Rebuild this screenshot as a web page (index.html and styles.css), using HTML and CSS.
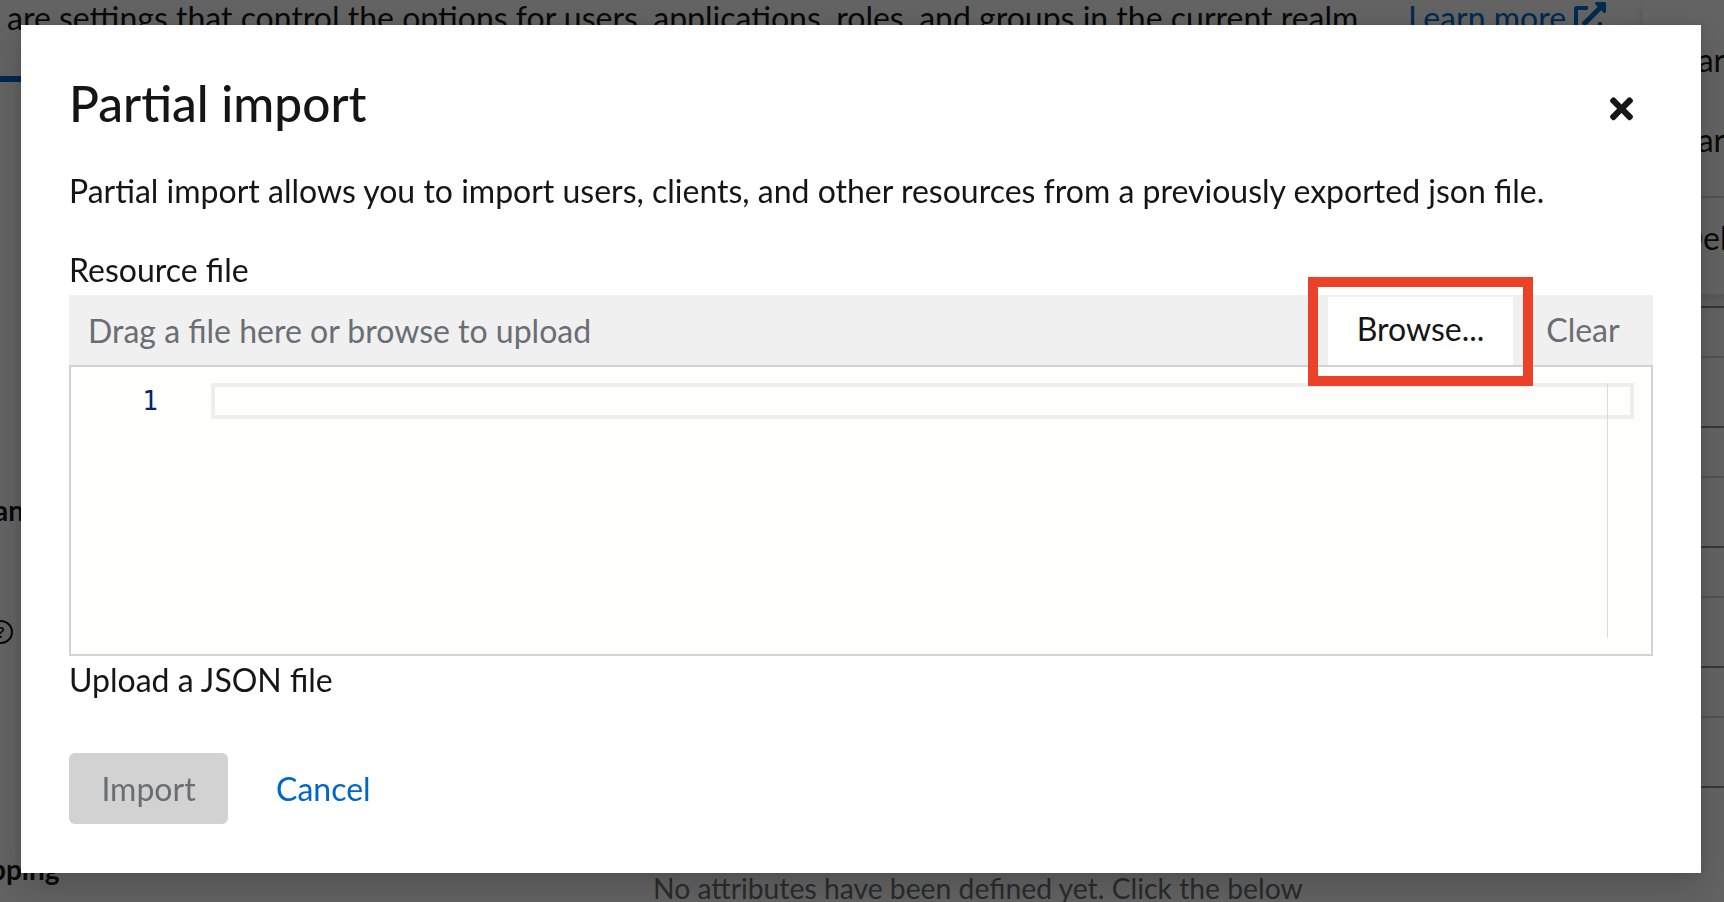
FILE: index.html
```html
<!DOCTYPE html>
<html lang="en">
<head>
<meta charset="utf-8">
<title>Partial import</title>
<link rel="stylesheet" href="styles.css">
</head>
<body>
<div class="page">
  <div class="page-intro">
    <span class="intro-text">are settings that control the options for users, applications, roles, and groups in the current realm.</span>
    <a class="learn-more" href="#">Learn more
      <svg viewBox="0 0 512 512" aria-hidden="true"><path d="M432,320H400a16,16,0,0,0-16,16V448H64V128H208a16,16,0,0,0,16-16V80a16,16,0,0,0-16-16H48A48,48,0,0,0,0,112V464a48,48,0,0,0,48,48H400a48,48,0,0,0,48-48V336A16,16,0,0,0,432,320ZM488,0h-128c-21.37,0-32.05,25.91-17,41l35.730,35.730L135,320.37a24,24,0,0,0,0,34L157.67,377a24,24,0,0,0,34,0L435.28,133.32,471,169c15,15,41,4.5,41-17V24A24,24,0,0,0,488,0Z"/></svg>
    </a>
  </div>
  <div class="tab-underline"></div>
  <div class="page-body">
    <div class="left-col">
      <div class="lbl lbl-an">an</div>
      <div class="help-icon">?</div>
      <div class="lbl lbl-pping">pping</div>
    </div>
    <div class="center-col">
      <div class="empty-text">No attributes have been defined yet. Click the below</div>
    </div>
    <div class="right-col">
      <div class="field-input"></div>
      <div class="field-input"></div>
      <div class="field-input"></div>
      <div class="field-input"></div>
      <div class="field-input"></div>
    </div>
  </div>
  <div class="action-menu">
    <div class="menu-item">Partial import</div>
    <div class="menu-item">Partial export</div>
    <div class="menu-divider"></div>
    <div class="menu-item">Delete</div>
  </div>
</div>

<div class="backdrop">
  <div class="modal" role="dialog" aria-labelledby="modal-title">
    <h1 class="modal-title" id="modal-title">Partial import</h1>
    <button class="close-btn" aria-label="Close">
      <svg viewBox="0 0 352 512" aria-hidden="true"><path d="M242.72 256l100.07-100.07c12.28-12.28 12.28-32.19 0-44.48l-22.24-22.24c-12.28-12.28-32.19-12.28-44.48 0L176 189.28 75.93 89.21c-12.28-12.28-32.19-12.28-44.48 0L9.21 111.45c-12.28 12.28-12.28 32.19 0 44.48L109.28 256 9.21 356.07c-12.28 12.28-12.28 32.19 0 44.48l22.24 22.24c12.28 12.28 32.2 12.28 44.48 0L176 322.72l100.07 100.07c12.28 12.28 32.2 12.28 44.48 0l22.24-22.24c12.28-12.28 12.28-32.19 0-44.48L242.72 256z"/></svg>
    </button>
    <div class="modal-body">
      <p class="desc">Partial import allows you to import users, clients, and other resources from a previously exported json file.</p>
      <div class="form-group">
        <label class="form-label">Resource file</label>
        <div class="file-upload">
          <div class="file-bar">
            <div class="file-input">Drag a file here or browse to upload</div>
            <div class="browse-btn">Browse...</div>
            <div class="clear-btn">Clear</div>
          </div>
          <div class="editor">
            <div class="gutter">1</div>
            <div class="code-area">
              <div class="current-line"></div>
              <div class="overview-ruler"></div>
            </div>
          </div>
          <div class="annotation"></div>
        </div>
        <div class="helper">Upload a JSON file</div>
      </div>
    </div>
    <div class="modal-footer">
      <button class="btn btn-import" disabled>Import</button>
      <button class="btn btn-cancel">Cancel</button>
    </div>
  </div>
</div>
</body>
</html>
```
FILE: styles.css
```css
* { box-sizing: border-box; }
html, body { margin: 0; padding: 0; }
body {
  width: 1724px;
  height: 902px;
  overflow: hidden;
  position: relative;
  background: #fff;
  font-family: "Lato", "Open Sans", sans-serif;
  color: #151515;
  font-size: 32px;
  line-height: 48px;
}

/* ---------- background page ---------- */
.page { height: 902px; overflow: hidden; position: relative; }
.page-intro {
  display: flex;
  align-items: center;
  height: 48px;
  margin-top: -6px;
  padding-left: 7px;
  white-space: nowrap;
}
.learn-more {
  color: #06c;
  margin-left: 42px;
  display: inline-flex;
  align-items: center;
  gap: 8px;
  text-decoration: none;
}
.learn-more svg { width: 32px; height: 32px; fill: #06c; }
.tab-underline { margin-top: 34px; height: 6px; width: 400px; background: #06c; }

.page-body { display: flex; height: 820px; }
.left-col { width: 600px; flex: none; display: flex; flex-direction: column; align-items: flex-start; }
.lbl { font-size: 28px; font-weight: 700; white-space: nowrap; }
.lbl-an { margin-top: 404px; margin-left: -6px; }
.help-icon {
  margin-top: 86px;
  margin-left: -11px;
  width: 24px;
  height: 24px;
  border: 2.5px solid #151515;
  border-radius: 50%;
  font-size: 16px;
  line-height: 19px;
  text-align: center;
  font-weight: 700;
}
.lbl-pping { margin-top: 201px; margin-left: -10px; }
.center-col { width: 700px; flex: none; }
.empty-text {
  margin-top: 782px;
  padding-left: 53px;
  font-size: 28.3px;
  color: #6a6e73;
  white-space: nowrap;
}
.right-col { flex: 1; padding-top: 154px; display: flex; flex-direction: column; gap: 48px; }
.field-input {
  height: 72px;
  background: #fff;
  border-top: 2px solid #d2d2d2;
  border-bottom: 2px solid #8a8d90;
}

.action-menu {
  position: absolute;
  left: 1643px;
  top: 0;
  width: 320px;
  background: #fff;
  padding: 20px 0 16px;
  box-shadow: 0 8px 16px 0 rgba(3, 3, 3, .12), 0 0 8px 0 rgba(3, 3, 3, .06);
}
.menu-item { padding: 16px 36px; white-space: nowrap; }
.menu-divider { height: 2px; background: #d2d2d2; margin-top: 16px; }

/* ---------- modal ---------- */
.backdrop {
  position: fixed;
  inset: 0;
  background: rgba(3, 3, 3, .62);
  display: flex;
  align-items: flex-start;
  padding: 25px 0 0 21px;
}
.modal {
  position: relative;
  width: 1680px;
  height: 848px;
  background: #fff;
  padding: 48px;
  display: flex;
  flex-direction: column;
  box-shadow: 0 16px 32px 0 rgba(3, 3, 3, .16), 0 0 8px 0 rgba(3, 3, 3, .1);
}
.modal-title {
  margin: 0;
  font-size: 49.6px;
  line-height: 60px;
  font-weight: 500;
}
.close-btn {
  position: absolute;
  left: 1589px;
  top: 67px;
  width: 23px;
  height: 34px;
  padding: 0;
  border: 0;
  background: none;
}
.close-btn svg { display: block; width: 23px; height: 33.5px; fill: #151515; }

.modal-body { margin-top: 34px; }
.desc { margin: 0; }
.form-group { margin-top: 31px; }
.form-label { display: block; margin-bottom: 1px; }

.file-upload { position: relative; }
.file-bar { display: flex; height: 70px; background: #f0f0f0; }
.file-input {
  flex: 1;
  display: flex;
  align-items: center;
  padding: 1px 0 0 19px;
  color: #6a6e73;
  white-space: nowrap;
}
.browse-btn {
  align-self: flex-end;
  width: 185px;
  height: 68px;
  padding-bottom: 4px;
  background: #fff;
  display: flex;
  align-items: center;
  justify-content: center;
  color: #151515;
}
.clear-btn {
  width: 140px;
  display: flex;
  align-items: center;
  justify-content: center;
  color: #6a6e73;
}
.editor {
  height: 291px;
  border: 2px solid #d2d2d2;
  background: #fefefd;
  display: flex;
  padding: 16px 0;
}
.gutter {
  width: 140px;
  flex: none;
  padding-right: 53px;
  text-align: right;
  font-family: "DejaVu Sans Mono", "Liberation Mono", monospace;
  font-size: 26px;
  line-height: 36px;
  color: #0b216f;
}
.code-area { flex: 1; position: relative; padding-right: 17px; }
.current-line { height: 36px; border: 4px solid #eeeeee; }
.overview-ruler {
  position: absolute;
  top: 0;
  bottom: 0;
  right: 43px;
  width: 1px;
  background: #dcdcdc;
}
.annotation {
  position: absolute;
  left: 1239px;
  top: -18px;
  width: 225px;
  height: 109px;
  border: 10px solid #ea4128;
  pointer-events: none;
}

.modal-footer { margin-top: 49px; display: flex; gap: 16px; align-items: center; }
.btn {
  height: 71px;
  padding: 0 32px;
  border: 0;
  border-radius: 6px;
  display: flex;
  align-items: center;
  justify-content: center;
  font: inherit;
  background: none;
}
.btn-import { width: 159px; background: #d2d2d2; color: #6a6e73; }
.btn-cancel { color: #06c; }
```
